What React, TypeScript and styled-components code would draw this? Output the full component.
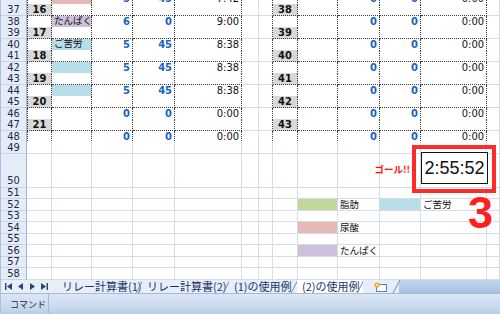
import React from 'react'
import styled, { createGlobalStyle } from 'styled-components'

const COLS = [26, 25, 40, 41, 42, 67, 17, 14, 25, 40, 42, 41, 66, 13]
const ROW_H = 11.5

const GlobalStyle = createGlobalStyle`
    html, body { margin: 0; padding: 0; background: #fff; }
    body { font-family: "Liberation Sans", "Noto Sans CJK JP", sans-serif; }
`

const Window = styled.div`
    width: 500px;
    height: 314px;
    overflow: hidden;
    display: flex;
    flex-direction: column;
    border-left: 1px solid #a8c0e2;
    box-sizing: border-box;
`

const Sheet = styled.div`
    position: relative;
    height: 280px;
    overflow: hidden;
    flex: none;
`

const Row = styled.div<{ $h: number; $first?: boolean }>`
    display: grid;
    grid-template-columns: ${COLS.slice(0, 13).map(c => c + 'px').join(' ')} 1fr;
    height: ${p => p.$h}px;
    margin-top: ${p => (p.$first ? 4 - p.$h : 0)}px;
`

const RowHead = styled.div<{ $tall?: boolean }>`
    box-sizing: border-box;
    background: #e4ecf7;
    border-right: 1px solid #9eb6ce;
    border-bottom: 1px solid #c5d3e6;
    color: #1d2a40;
    font-family: "Liberation Sans Narrow", "DejaVu Sans Condensed", "Liberation Sans", sans-serif;
    font-size: 11px;
    display: flex;
    justify-content: center;
    align-items: ${p => (p.$tall ? 'flex-end' : 'center')};
    padding-bottom: ${p => (p.$tall ? 1 : 0)}px;
    line-height: 1;
    overflow: hidden;
`

type Kind = 'plain' | 'tbl'

const Cell = styled.div<{
    $kind: Kind
    $bg?: string
    $align?: string
    $color?: string
    $bold?: boolean
    $lead?: boolean
    $edge?: boolean
    $cjk?: boolean
    $pr?: number
}>`
    box-sizing: border-box;
    display: flex;
    align-items: center;
    justify-content: ${p => p.$align || 'flex-start'};
    padding: 0 ${p => p.$pr ?? 2}px 0 2px;
    white-space: nowrap;
    overflow: visible;
    line-height: 1;
    background: ${p => p.$bg || '#fff'};
    color: ${p => p.$color || '#111'};
    font-weight: ${p => (p.$bold ? 700 : 400)};
    font-size: ${p => (p.$cjk ? 9.5 : 11)}px;
    font-family: ${p => p.$cjk
        ? '"Noto Sans CJK JP", sans-serif'
        : '"Liberation Sans Narrow", "DejaVu Sans Condensed", "Liberation Sans", sans-serif'};
    border-right: ${p => (p.$kind === 'tbl' || p.$edge ? '1px dotted #3c3c3c' : '1px solid #d6dde8')};
    border-bottom: ${p => (p.$kind === 'tbl' ? '1px dotted #3c3c3c' : '1px solid #d6dde8')};
    border-left: ${p => (p.$lead ? '1px dotted #3c3c3c' : 'none')};
`

const GoalFrame = styled.div`
    position: absolute;
    left: 411px;
    top: 145px;
    width: 84px;
    height: 48px;
    box-sizing: border-box;
    border: 4px solid #ff2b2b;
    padding: 3px 0 0 5px;
`

const GoalTime = styled.div`
    width: 67px;
    height: 32px;
    box-sizing: border-box;
    border: 1px solid #111;
    background: #fff;
    display: flex;
    align-items: center;
    justify-content: center;
    font-family: "Liberation Sans", sans-serif;
    font-size: 18px;
    color: #111;
`

const BigThree = styled.div`
    position: absolute;
    left: 467px;
    top: 190px;
    font-family: "Liberation Sans", sans-serif;
    font-weight: 700;
    font-size: 45px;
    line-height: 1;
    color: #ff1f1f;
`

const TabBar = styled.div`
    display: flex;
    height: 13px;
    flex: none;
    background: linear-gradient(#c3d5ed, #a8c1e3);
`

const TabStrip = styled.div`
    display: flex;
    align-items: stretch;
    background: #e8eef8;
`

const Nav = styled.div`
    display: flex;
    align-items: center;
    gap: 5px;
    width: 56px;
    padding-left: 4px;
    box-sizing: border-box;
`

const Tab = styled.div<{ $active?: boolean; $w: number }>`
    position: relative;
    width: ${p => p.$w}px;
    padding-left: 5px;
    box-sizing: border-box;
    display: flex;
    align-items: center;
    font-family: "Noto Sans CJK JP", sans-serif;
    font-size: 11px;
    line-height: 1;
    color: #1b3468;
    white-space: nowrap;
    background: ${p => (p.$active ? '#fff' : '#e8eef8')};
    &::after {
        content: '';
        position: absolute;
        right: 2px;
        top: 0;
        width: 1px;
        height: 100%;
        background: #6d8bb8;
        transform: skewX(-28deg);
    }
`

const InsertTab = styled(Tab)`
    justify-content: center;
    padding-left: 0;
`

const StatusBar = styled.div`
    flex: 1;
    display: flex;
    align-items: center;
    background: linear-gradient(#dce7f5, #c4d6ee 80%, #b4c9e6);
    border-top: 1px solid #a3bbdc;
`

const StatusCell = styled.div`
    width: 48px;
    height: 100%;
    box-sizing: border-box;
    padding-left: 9px;
    display: flex;
    align-items: center;
    border-right: 1px solid #a3bbdc;
    font-family: "Noto Sans CJK JP", sans-serif;
    font-size: 9px;
    white-space: nowrap;
    color: #1c2a44;
`

const PURPLE = '#ccc0da'
const BLUE = '#b7dee8'
const PINK = '#e6b9b8'
const GREEN = '#c4d79b'
const NUM_BG = '#d9d9d9'
const VAL = '#1463c2'

type Spec = {
    text?: string
    bg?: string
    align?: string
    color?: string
    bold?: boolean
    cjk?: boolean
    pr?: number
}

const leftData: Record<number, [string, string | undefined, string, string, string]> = {
    36: ['', PINK, '5', '45', '7:42'],
    38: ['たんぱく', PURPLE, '6', '0', '9:00'],
    40: ['ご苦労', BLUE, '5', '45', '8:38'],
    42: ['', BLUE, '5', '45', '8:38'],
    44: ['', BLUE, '5', '45', '8:38'],
    46: ['', undefined, '0', '0', '0:00'],
    48: ['', undefined, '0', '0', '0:00'],
}

const val = (t: string): Spec => ({ text: t, align: 'flex-end', color: VAL, bold: true })
const time = (t: string): Spec => ({ text: t, align: 'flex-end' })
const num = (n: number): Spec => ({ text: String(n), align: 'center', bg: NUM_BG, bold: true })
const label = (t: string, bg?: string): Spec => ({ text: t, bg, cjk: true })

function rowCells(r: number): Record<number, Spec> {
    const c: Record<number, Spec> = {}
    if (r <= 48) {
        if (r % 2 === 1) {
            c[1] = num(16 + (r - 37) / 2)
            c[8] = num(38 + (r - 37) / 2)
        } else {
            const [t, bg, d, e, tm] = leftData[r]
            c[2] = label(t, bg)
            c[3] = val(d)
            c[4] = val(e)
            c[5] = time(tm)
            c[10] = val('0')
            c[11] = val('0')
            c[12] = time('0:00')
        }
    }
    if (r === 50) c[11] = { text: 'ゴール!!', align: 'flex-end', color: '#ff1010', bold: true, cjk: true, pr: 10 }
    if (r === 52) {
        c[9] = { bg: GREEN }
        c[10] = label('脂肪')
        c[11] = { bg: BLUE }
        c[12] = label('ご苦労')
    }
    if (r === 54) {
        c[9] = { bg: PINK }
        c[10] = label('尿酸')
    }
    if (r === 56) {
        c[9] = { bg: PURPLE }
        c[10] = label('たんぱく')
    }
    return c
}

const inTable = (r: number, col: number) =>
    r <= 48 && ((col >= 1 && col <= 5) || (col >= 8 && col <= 12))

const rows = Array.from({ length: 23 }, (_, i) => 36 + i)

const Arrow = ({ dir, bar }: { dir: 'l' | 'r'; bar?: boolean }) => (
    <svg width="7" height="7" viewBox="0 0 7 7">
        {dir === 'l'
            ? <path d={bar ? 'M0 0h1.4v7H0zM7 0v7L2 3.5z' : 'M6 0v7L1 3.5z'} fill="#26457c" />
            : <path d={bar ? 'M5.6 0H7v7H5.6zM0 0v7l5-3.5z' : 'M1 0v7l5-3.5z'} fill="#26457c" />}
    </svg>
)

const NewSheetIcon = () => (
    <svg width="16" height="10" viewBox="0 0 16 10">
        <rect x="3.5" y="2.5" width="10" height="7" fill="#fff" stroke="#5c7fb3" />
        <circle cx="4" cy="3" r="2.6" fill="#f5a623" />
        <circle cx="4" cy="3" r="1.1" fill="#fff4c8" />
    </svg>
)

export default function App() {
    return (
        <Window>
            <GlobalStyle />
            <Sheet>
                {rows.map(r => {
                    const cells = rowCells(r)
                    const h = r === 50 ? 34 : ROW_H
                    return (
                        <Row key={r} $h={h} $first={r === 36}>
                            <RowHead $tall={r === 50}>{r === 36 ? '' : r}</RowHead>
                            {COLS.slice(1).map((_, i) => {
                                const col = i + 1
                                const s = cells[col] || {}
                                const tbl = inTable(r, col)
                                return (
                                    <Cell
                                        key={col}
                                        $kind={tbl ? 'tbl' : 'plain'}
                                        $lead={tbl && col === 1}
                                        $edge={r <= 48 && col === 7}
                                        $bg={s.bg}
                                        $align={s.align}
                                        $color={s.color}
                                        $bold={s.bold}
                                        $cjk={s.cjk}
                                        $pr={s.pr}
                                    >
                                        {s.text}
                                    </Cell>
                                )
                            })}
                        </Row>
                    )
                })}
                <GoalFrame>
                    <GoalTime>2:55:52</GoalTime>
                </GoalFrame>
                <BigThree>3</BigThree>
            </Sheet>
            <TabBar>
                <TabStrip>
                    <Nav>
                        <Arrow dir="l" bar />
                        <Arrow dir="l" />
                        <Arrow dir="r" />
                        <Arrow dir="r" bar />
                    </Nav>
                    <Tab $w={85}>リレー計算書(1)</Tab>
                    <Tab $w={87}>リレー計算書(2)</Tab>
                    <Tab $w={68}>(1)の使用例</Tab>
                    <Tab $w={66} $active>(2)の使用例</Tab>
                    <InsertTab $w={36}><NewSheetIcon /></InsertTab>
                </TabStrip>
            </TabBar>
            <StatusBar>
                <StatusCell>コマンド</StatusCell>
            </StatusBar>
        </Window>
    )
}
